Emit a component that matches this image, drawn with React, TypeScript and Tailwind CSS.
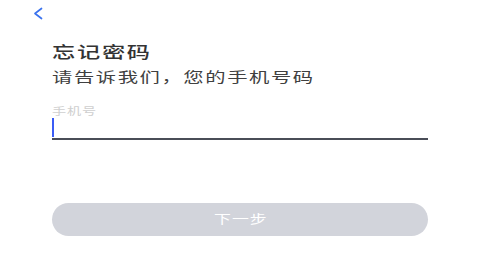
export default function App() {
  return (
    <div
      className="w-[480px] h-[270px] bg-white overflow-hidden"
      style={{ fontFamily: '"Noto Sans CJK SC", "Noto Sans", sans-serif' }}
    >
      <div className="pl-[32px] pt-[7px] h-[20px]">
        <svg width="12" height="13" viewBox="0 0 12 13" fill="none">
          <path d="M9.5 1.5L3 6.5l6.5 5" stroke="#3a72ee" strokeWidth="1.7" strokeLinecap="round" strokeLinejoin="round" />
        </svg>
      </div>
      <div className="px-[52px] pt-[20px]">
        <h1 className="text-[16px] leading-[22px] text-[#333] font-medium">
          <span className="inline-block origin-left scale-x-[1.45] tracking-[1.2px]">忘记密码</span>
        </h1>
        <p className="mt-[5px] text-[14px] leading-[18px] text-[#404040]">
          <span className="inline-block origin-left scale-x-[1.45] tracking-[1.1px]">请告诉我们，您的手机号码</span>
        </p>
        <div className="mt-[20px]">
          <div className="text-[10.5px] leading-[12px] text-[#cfcfcf]">
            <span className="inline-block origin-left scale-x-[1.35] tracking-[0.6px]">手机号</span>
          </div>
          <div className="h-[23px] border-b-[2px] border-[#4a4d57] flex items-start pt-[1px]">
            <div className="w-[2px] h-[19px] bg-[#3b5cf5]" />
          </div>
        </div>
        <button className="mt-[63px] w-full h-[33px] rounded-full bg-[#d2d4db] text-white text-[12.5px] flex items-center justify-center">
          <span className="inline-block scale-x-[1.35] tracking-[0.8px] pl-[0.8px]">下一步</span>
        </button>
      </div>
    </div>
  );
}
